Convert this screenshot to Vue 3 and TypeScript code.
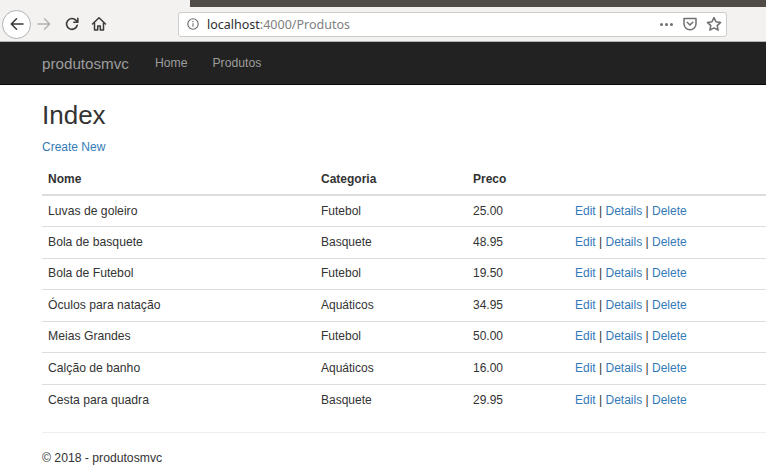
<script setup lang="ts">
interface Produto { nome: string; categoria: string; preco: string }
const produtos: Produto[] = [
  { nome: 'Luvas de goleiro', categoria: 'Futebol', preco: '25.00' },
  { nome: 'Bola de basquete', categoria: 'Basquete', preco: '48.95' },
  { nome: 'Bola de Futebol', categoria: 'Futebol', preco: '19.50' },
  { nome: 'Óculos para natação', categoria: 'Aquáticos', preco: '34.95' },
  { nome: 'Meias Grandes', categoria: 'Futebol', preco: '50.00' },
  { nome: 'Calção de banho', categoria: 'Aquáticos', preco: '16.00' },
  { nome: 'Cesta para quadra', categoria: 'Basquete', preco: '29.95' },
]
</script>

<template>
  <div class="page">
    <header class="chrome">
      <div class="strip"><div class="strip-dark"></div></div>
      <div class="toolbar">
        <button class="back" aria-label="Voltar">
          <svg width="16" height="16" viewBox="0 0 16 16" fill="none" stroke="#3b3b3b" stroke-width="1.6" stroke-linecap="round" stroke-linejoin="round"><path d="M14 8H2.5M7.5 2.800 2.300 8l5.200 5.200" /></svg>
        </button>
        <svg class="forward" width="16" height="16" viewBox="0 0 16 16" fill="none" stroke="#b1b1b1" stroke-width="1.4" stroke-linecap="round" stroke-linejoin="round"><path d="M2 8h11.500M8.500 2.800 13.700 8l-5.200 5.200" /></svg>
        <svg class="reload" width="16" height="16" viewBox="0 0 16 16" fill="none" stroke="#3b3b3b" stroke-width="1.6" stroke-linecap="round" stroke-linejoin="round"><path d="M13.200 9.200A5.400 5.400 0 1 1 12 4.400L13.600 6" /><path d="M13.800 2.200v4h-4" /></svg>
        <svg class="home" width="16" height="16" viewBox="0 0 16 16" fill="none" stroke="#3b3b3b" stroke-width="1.5" stroke-linejoin="round" stroke-linecap="round"><path d="M1.500 8 8 1.800 14.500 8" /><path d="M3.500 7v7h3.200v-4h2.600v4h3.200V7" /></svg>
        <div class="urlbar">
          <svg class="info" width="14" height="14" viewBox="0 0 14 14" fill="none" stroke="#6a6a6a" stroke-width="1.1"><circle cx="7" cy="7" r="5.200" /><path d="M7 6.200v3.600M7 4v1.200" /></svg>
          <span class="url"><span class="host">localhost</span>:4000/Produtos</span>
          <span class="dots"><i></i><i></i><i></i></span>
          <svg class="pocket" width="16" height="16" viewBox="0 0 16 16" fill="none" stroke="#6f6f6f" stroke-width="1.5" stroke-linecap="round" stroke-linejoin="round"><path d="M2 2.500h12v5.300a6 6 0 0 1-12 0Z" /><path d="M5.200 6.200 8 9l2.800-2.800" /></svg>
          <svg class="star" width="16" height="16" viewBox="0 0 16 16" fill="none" stroke="#6f6f6f" stroke-width="1.5" stroke-linejoin="round"><path d="m8 1.600 2 4.200 4.600.6-3.400 3.200.9 4.600L8 11.900l-4.100 2.300.9-4.600L1.400 6.400 6 5.800Z" /></svg>
        </div>
      </div>
    </header>

    <nav class="navbar">
      <a class="brand">produtosmvc</a>
      <a class="nav-link">Home</a>
      <a class="nav-link">Produtos</a>
    </nav>

    <main class="container">
      <h1>Index</h1>
      <p class="create"><a>Create New</a></p>
      <table>
        <colgroup>
          <col class="c1" /><col class="c2" /><col class="c3" /><col />
        </colgroup>
        <thead>
          <tr><th>Nome</th><th>Categoria</th><th>Preco</th><th></th></tr>
        </thead>
        <tbody>
          <tr v-for="p in produtos" :key="p.nome">
            <td class="name">{{ p.nome }}</td>
            <td>{{ p.categoria }}</td>
            <td>{{ p.preco }}</td>
            <td><a>Edit</a> | <a>Details</a> | <a>Delete</a></td>
          </tr>
        </tbody>
      </table>
      <hr />
      <footer>© 2018 - produtosmvc</footer>
    </main>
  </div>
</template>

<style>
html, body { margin: 0; background: #fff; overflow: hidden; }
</style>

<style scoped>
.page {
  width: 766px;
  height: 476px;
  overflow: hidden;
  font-family: "Liberation Sans", Arial, sans-serif;
  font-size: 12px;
  color: #333;
}
.chrome {
  height: 42px;
  background: #f3f2f0;
  border-bottom: 1px solid #b5b5b3;
  box-sizing: border-box;
}
.strip { height: 7px; padding-left: 190px; }
.strip-dark { height: 7px; background: #504c45; }
.toolbar {
  height: 34px;
  display: flex;
  align-items: center;
}
.back {
  width: 29px;
  height: 29px;
  margin-left: 2px;
  border-radius: 50%;
  border: 1px solid #b2b1af;
  background: #fff;
  display: flex;
  align-items: center;
  justify-content: center;
  padding: 0;
  box-sizing: border-box;
}
.forward { margin-left: 5px; }
.reload { margin-left: 12px; }
.home { margin-left: 11px; }
.urlbar {
  width: 549px;
  height: 25px;
  box-sizing: border-box;
  background: #fff;
  border: 1px solid #cfcdca;
  border-radius: 3px;
  display: flex;
  align-items: center;
  margin-left: 71px;
}
.info { margin-left: 7px; }
.url {
  margin-left: 7px;
  font-family: "Noto Sans", "Open Sans", sans-serif;
  font-size: 12.5px;
  color: #808080;
  flex: 1;
}
.host { color: #2e2e2e; }
.dots { display: flex; gap: 2px; margin-right: 9px; }
.dots i { width: 3px; height: 3px; border-radius: 50%; background: #6f6f6f; }
.pocket { margin-right: 8px; }
.star { margin-right: 4px; }
.navbar {
  height: 43px;
  box-sizing: border-box;
  background: #222;
  border-bottom: 1px solid #080808;
  display: flex;
  align-items: center;
  padding-left: 42px;
}
.brand { font-size: 15.2px; color: #9d9d9d; margin-right: 26px; }
.nav-link { color: #9d9d9d; margin-right: 25px; font-size: 12.2px; }
.container { padding-left: 42px; }
h1 {
  margin: 15px 0 0;
  font-size: 26px;
  font-weight: 400;
  line-height: 31px;
  color: #333;
}
.create { margin: 8px 0 0; line-height: 17px; }
a { color: #337ab7; }
.nav-link, .brand { color: #9d9d9d; }
table {
  border-collapse: collapse;
  table-layout: fixed;
  width: 724px;
  margin-top: 8px;
}
.c1 { width: 273px; }
.c2 { width: 152px; }
.c3 { width: 102px; }
th, td {
  padding: 0 6px;
  text-align: left;
  line-height: 17px;
}
th { height: 30px; font-weight: 700; color: #333; border-bottom: 2px solid #ddd; }
td { height: 31.5px; border-top: 1px solid #ddd; box-sizing: border-box; }
td.name { font-size: 12.2px; }
tbody tr:first-child td { border-top: none; }
hr { border: none; border-top: 1px solid #eee; margin: 16px 0 0; }
footer { margin-top: 17px; line-height: 17px; font-size: 12.2px; }
</style>
